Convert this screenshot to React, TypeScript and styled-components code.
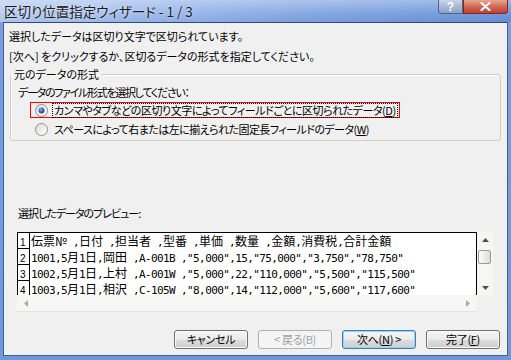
import styled, { createGlobalStyle } from 'styled-components';

const uiFont = `"Noto Sans CJK JP", "Noto Sans", sans-serif`;

const GlobalStyle = createGlobalStyle`
  html, body { margin: 0; padding: 0; }
  body { width: 511px; height: 360px; overflow: hidden; background: #fff; }
`;

const Window = styled.div`
  width: 511px;
  height: 360px;
  display: flex;
  flex-direction: column;
  font-family: ${uiFont};
  font-size: 11px;
  font-feature-settings: "palt";
  color: #000;
  background: #6f97da;
`;

const TitleBar = styled.div`
  height: 22px;
  flex: none;
  display: flex;
  align-items: flex-start;
  background:
    linear-gradient(180deg, rgba(255, 255, 255, 0.35) 0%, rgba(255, 255, 255, 0.05) 60%, rgba(0, 0, 0, 0.04) 100%),
    linear-gradient(90deg, #b4cbf1 0%, #9ab8eb 30%, #80a4e2 60%, #6a92d9 100%);
`;

const Title = styled.div`
  padding: 2px 0 0 4px;
  font-size: 13.5px;
  line-height: 18px;
  color: #1c1c1c;
  text-shadow: 0 0 3px rgba(255, 255, 255, 0.7);
`;

const CaptionButton = styled.div<{ $kind: 'help' | 'close' }>`
  height: 14px;
  width: ${p => (p.$kind === 'help' ? 25 : 45)}px;
  box-sizing: border-box;
  display: flex;
  align-items: center;
  justify-content: center;
  border: 1px solid ${p => (p.$kind === 'help' ? '#50648c' : '#7a2a22')};
  border-top: none;
  margin-left: ${p => (p.$kind === 'help' ? 'auto' : '0')};
  margin-right: ${p => (p.$kind === 'close' ? '3px' : '0')};
  border-radius: ${p => (p.$kind === 'help' ? '0 0 0 4px' : '0 0 4px 0')};
  background: ${p =>
    p.$kind === 'help'
      ? 'linear-gradient(180deg, #c9d5ea 0%, #a8b8d6 50%, #8fa3c8 100%)'
      : 'linear-gradient(180deg, #e9a590 0%, #d16a56 50%, #c2402e 100%)'};
  color: #fff;
  font-family: "Liberation Sans", sans-serif;
  font-weight: bold;
  font-size: 12px;
  line-height: 12px;
`;

const Frame = styled.div`
  flex: 1;
  display: flex;
  padding: 0 3px 4px;
  background: linear-gradient(180deg, #7a9fdd 0%, #6f97da 100%);
`;

const Client = styled.div`
  flex: 1;
  display: flex;
  flex-direction: column;
  background: #f0f0f0;
  border: 1px solid #3e5f9c;
  border-top-color: #2c4a80;
  padding: 3px 0 0 0;
`;

const Line = styled.div`
  line-height: 20px;
  height: 20px;
  padding-left: 5px;
  white-space: nowrap;
`;

const Group = styled.fieldset`
  margin: 0 6px;
  padding: 0 0 3px 7px;
  border: 1px solid #d0d0bf;
  border-radius: 3px;
  box-shadow: inset 1px 1px 0 #fff;
  height: 75px;
  box-sizing: border-box;
`;

const Legend = styled.legend`
  padding: 0 2px 0 3px;
  margin-left: -7px;
  line-height: 16px;
`;

const GroupText = styled.div`
  line-height: 16px;
  margin-top: 2px;
  letter-spacing: -1.3px;
`;

const Option = styled.div<{ $marked?: boolean }>`
  display: inline-flex;
  align-items: center;
  height: 16px;
  box-sizing: border-box;
  margin: 2px 0 0 12px;
  padding: 0 2px 0 4px;
  border: 1px solid ${p => (p.$marked ? '#ff0000' : 'transparent')};
  gap: 5px;
  white-space: nowrap;
`;

const OptionLabel = styled.span<{ $focused?: boolean; $squeeze: number }>`
  line-height: 13px;
  padding: 0 1px;
  letter-spacing: ${p => p.$squeeze}px;
  outline: ${p => (p.$focused ? '1px dotted #000' : 'none')};
`;

const Key = styled.span`
  text-decoration: underline;
  text-underline-offset: 1px;
`;

const PreviewLabel = styled.div`
  margin: 64px 0 0 14px;
  line-height: 16px;
  letter-spacing: -1px;
`;

const Preview = styled.div`
  margin: 11px 0 0 13px;
  width: 476px;
  height: 80px;
  display: grid;
  grid-template-columns: 460px 16px;
  grid-template-rows: 63px 17px;
`;

const Grid = styled.div`
  border: 1px solid #000;
  border-bottom: none;
  background: #fff;
  overflow: hidden;
`;

const Row = styled.div`
  display: flex;
  height: 16px;
`;

const RowNo = styled.div`
  width: 12px;
  flex: none;
  border-right: 1px solid #000;
  border-bottom: 1px solid #000;
  box-sizing: border-box;
  font-family: "Liberation Sans", sans-serif;
  font-size: 10px;
  line-height: 10px;
  display: flex;
  align-items: flex-end;
  padding: 0 0 0 2px;
`;

const RowText = styled.div`
  padding-left: 1px;
  line-height: 16px;
  white-space: pre;
  font-family: "DejaVu Sans Mono", "Liberation Mono", monospace;
  font-size: 11px;
  letter-spacing: -0.62px;
`;

const Wide = styled.span`
  font-family: "Noto Sans CJK JP", sans-serif;
  font-size: 12px;
  letter-spacing: 0;
`;

const VScroll = styled.div`
  background: #f6f6f4;
  display: flex;
  flex-direction: column;
  align-items: center;
  justify-content: space-between;
  padding: 6px 0 5px;
  box-sizing: border-box;
  position: relative;
`;

const Thumb = styled.div`
  position: absolute;
  top: 18px;
  left: 1px;
  width: 13px;
  height: 14px;
  box-sizing: border-box;
  border: 1px solid #9a9a9a;
  border-radius: 2px;
  background: linear-gradient(90deg, #fdfdfd 0%, #eaeaea 60%, #dcdcdc 100%);
`;

const HScroll = styled.div`
  background: #f6f6f4;
  border-bottom: 1px solid #e2e2e2;
  display: flex;
  align-items: center;
  justify-content: space-between;
  padding: 0 7px 0 7px;
`;

const Footer = styled.div`
  display: flex;
  justify-content: flex-end;
  gap: 10px;
  margin: 18px 7px 0 0;
`;

const Button = styled.button<{ $focused?: boolean }>`
  width: 74px;
  height: 19px;
  padding: 0;
  font-family: ${uiFont};
  font-feature-settings: "palt";
  font-size: 11px;
  line-height: 15px;
  letter-spacing: -0.3px;
  border-radius: 3px;
  color: #000;
  border: 1px solid ${p => (p.$focused ? '#3c7fb1' : '#707070')};
  background: linear-gradient(180deg, #f6f6f6 0%, #eaeaea 50%, #dddddd 51%, #cfcfcf 100%);
  box-shadow: ${p => (p.$focused ? 'inset 0 0 0 1px #94d3f8' : 'inset 0 0 0 1px #fbfbfb')};
  &:disabled {
    color: #a0a0a0;
    border-color: #adb2b5;
    background: #f4f4f4;
    box-shadow: none;
  }
`;

const Arrow = ({ dir }: { dir: 'up' | 'down' | 'left' | 'right' }) => {
  const pts = {
    up: '0,4 3.5,0 7,4',
    down: '0,0 3.5,4 7,0',
    left: '4,0 0,3.5 4,7',
    right: '0,0 4,3.5 0,7',
  }[dir];
  const w = dir === 'up' || dir === 'down' ? 7 : 4;
  const h = dir === 'up' || dir === 'down' ? 4 : 7;
  return (
    <svg width={w} height={h} viewBox={`0 0 ${w} ${h}`}>
      <polygon points={pts} fill={dir === 'up' || dir === 'down' ? '#4d4d4d' : '#a8a8a8'} />
    </svg>
  );
};

const Radio = ({ checked }: { checked?: boolean }) => (
  <svg width="13" height="13" viewBox="0 0 13 13">
    <defs>
      <linearGradient id={checked ? 'rbg1' : 'rbg0'} x1="0" y1="0" x2="1" y2="1">
        <stop offset="0" stopColor="#dcdcd6" />
        <stop offset="1" stopColor="#ffffff" />
      </linearGradient>
      <radialGradient id="dot" cx="0.4" cy="0.35" r="0.7">
        <stop offset="0" stopColor="#8ab4ee" />
        <stop offset="0.6" stopColor="#2a5fb8" />
        <stop offset="1" stopColor="#1a3f8a" />
      </radialGradient>
    </defs>
    <circle cx="6.5" cy="6.5" r="6" fill={`url(#${checked ? 'rbg1' : 'rbg0'})`} stroke="#8e8f8f" />
    {checked && <circle cx="6.5" cy="6.5" r="3" fill="url(#dot)" />}
  </svg>
);

// half-width text in a 6px mono font, full-width characters at 12px
const mixed = (s: string) =>
  s.split(/([^\x00-\x7f]+)/).map((part, i) =>
    /[^\x00-\x7f]/.test(part) ? <Wide key={i}>{part}</Wide> : part
  );

const rows = [
  '伝票№ ,日付 ,担当者 ,型番 ,単価 ,数量 ,金額,消費税,合計金額',
  '1001,5月1日,岡田 ,A-001B ,"5,000",15,"75,000","3,750","78,750"',
  '1002,5月1日,上村 ,A-001W ,"5,000",22,"110,000","5,500","115,500"',
  '1003,5月1日,相沢 ,C-105W ,"8,000",14,"112,000","5,600","117,600"',
];

export default function App() {
  return (
    <>
      <GlobalStyle />
      <Window>
        <TitleBar>
          <Title>区切り位置指定ウィザード - 1 / 3</Title>
          <CaptionButton $kind="help">?</CaptionButton>
          <CaptionButton $kind="close">
            <svg width="11" height="9" viewBox="0 0 11 9">
              <path d="M1.5 1 L9.5 8 M9.5 1 L1.5 8" stroke="#fff" strokeWidth="2.2" strokeLinecap="round" />
            </svg>
          </CaptionButton>
        </TitleBar>
        <Frame>
          <Client>
            <Line>選択したデータは区切り文字で区切られています。</Line>
            <Line>[次へ] をクリックするか、区切るデータの形式を指定してください。</Line>
            <Group>
              <Legend>元のデータの形式</Legend>
              <GroupText>データのファイル形式を選択してください：</GroupText>
              <Option $marked>
                <Radio checked />
                <OptionLabel $focused $squeeze={-0.45}>
                  カンマやタブなどの区切り文字によってフィールドごとに区切られたデータ(<Key>D</Key>)
                </OptionLabel>
              </Option>
              <br />
              <Option>
                <Radio />
                <OptionLabel $squeeze={-0.55}>
                  スペースによって右または左に揃えられた固定長フィールドのデータ(<Key>W</Key>)
                </OptionLabel>
              </Option>
            </Group>
            <PreviewLabel>選択したデータのプレビュー:</PreviewLabel>
            <Preview>
              <Grid>
                {rows.map((r, i) => (
                  <Row key={i}>
                    <RowNo>{i + 1}</RowNo>
                    <RowText>{mixed(r)}</RowText>
                  </Row>
                ))}
              </Grid>
              <VScroll>
                <Arrow dir="up" />
                <Thumb />
                <Arrow dir="down" />
              </VScroll>
              <HScroll>
                <Arrow dir="left" />
                <Arrow dir="right" />
              </HScroll>
              <div />
            </Preview>
            <Footer>
              <Button>キャンセル</Button>
              <Button disabled>&lt; 戻る(B)</Button>
              <Button $focused>
                次へ(<Key>N</Key>) &gt;
              </Button>
              <Button>
                完了(<Key>F</Key>)
              </Button>
            </Footer>
          </Client>
        </Frame>
      </Window>
    </>
  );
}
